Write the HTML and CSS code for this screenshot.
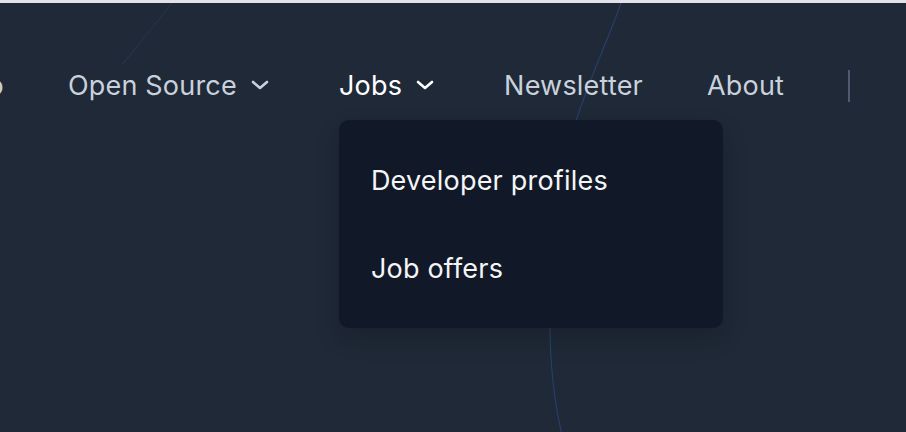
FILE: index.html
```html
<!DOCTYPE html>
<html lang="en">
<head>
  <meta charset="UTF-8">
  <title>Navigation</title>
  <link rel="stylesheet" href="styles.css">
</head>
<body>
  <div class="page">
    <!-- decorative arcs behind the header -->
    <svg class="bg-lines" width="906" height="432" viewBox="0 0 906 432" aria-hidden="true">
      <path class="arc" d="M621 0 C600 60 570 110 558 200 C548 280 545 360 562 432"/>
      <path class="arc faint" d="M172 0 Q148 30 122 62"/>
    </svg>

    <header class="header">
      <nav class="nav">
        <a class="nav-item" href="#">Demo</a>
        <a class="nav-item" href="#">Open Source
          <svg class="chevron" width="18" height="10" viewBox="0 0 18 10"><polyline points="2,2 9,8 16,2"/></svg>
        </a>
        <div class="nav-item active">Jobs
          <svg class="chevron" width="18" height="10" viewBox="0 0 18 10"><polyline points="2,2 9,8 16,2"/></svg>
          <div class="dropdown">
            <a class="dropdown-item" href="#">Developer profiles</a>
            <a class="dropdown-item" href="#">Job offers</a>
          </div>
        </div>
        <a class="nav-item" href="#">Newsletter</a>
        <a class="nav-item" href="#">About</a>
        <span class="divider"></span>
      </nav>
    </header>
  </div>
</body>
</html>
```

FILE: styles.css
```css
html, body {
  margin: 0;
  padding: 0;
  height: 100%;
}

body {
  font-family: "Inter", "Open Sans", sans-serif;
  background-color: #1f2937;
  overflow: hidden;
}

.page {
  position: relative;
  height: 100%;
  border-top: 3px solid #e1e3e6;
  box-sizing: border-box;
}

.bg-lines {
  position: absolute;
  top: 0;
  left: 0;
  pointer-events: none;
}

.arc {
  fill: none;
  stroke: #2b4475;
  stroke-width: 1.2;
  opacity: 0.8;
}

.arc.faint {
  opacity: 0.35;
}

.header {
  position: relative;
  padding-top: 63px;
}

.nav {
  display: flex;
  align-items: center;
  gap: 64px;
  margin-left: -72px;
}

.nav-item {
  position: relative;
  display: flex;
  align-items: center;
  gap: 14px;
  height: 40px;
  font-size: 27px;
  letter-spacing: 0.2px;
  line-height: 40px;
  color: #c9d1dd;
  text-decoration: none;
  white-space: nowrap;
}

.nav-item.active {
  color: #ffffff;
}

.chevron {
  margin-top: -2px;
  margin-right: 6px;
}

.chevron polyline {
  fill: none;
  stroke: currentColor;
  stroke-width: 2.6;
  stroke-linecap: round;
  stroke-linejoin: round;
}

.divider {
  width: 2px;
  height: 32px;
  background-color: #4e5b70;
}

/* Jobs dropdown */
.dropdown {
  position: absolute;
  top: calc(100% + 14px);
  left: 0;
  width: 384px;
  padding: 17px 0 15px;
  box-sizing: border-box;
  background-color: #111827;
  border-radius: 10px;
  box-shadow: 0 10px 25px rgba(0, 0, 0, 0.18);
  display: flex;
  flex-direction: column;
}

.dropdown-item {
  padding: 24px 32px;
  line-height: 40px;
  font-size: 27px;
  letter-spacing: 0.2px;
  color: #f4f5f7;
  text-decoration: none;
}
```
